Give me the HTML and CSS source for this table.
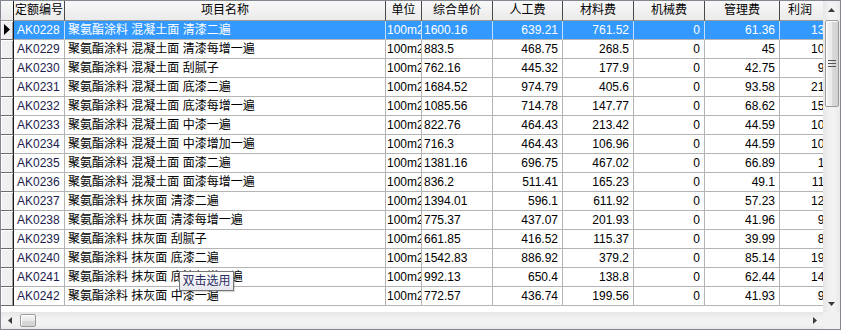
FILE: index.html
```html
<!DOCTYPE html>
<html lang="zh-CN">
<head>
<meta charset="utf-8">
<title>定额选择</title>
<link rel="stylesheet" href="styles.css">
</head>
<body>
<div class="frame">
  <div class="grid">
    <div class="row head">
      <div class="ind hind"></div>
      <div class="hc">定额编号</div>
      <div class="hc">项目名称</div>
      <div class="hc">单位</div>
      <div class="hc">综合单价</div>
      <div class="hc">人工费</div>
      <div class="hc">材料费</div>
      <div class="hc">机械费</div>
      <div class="hc">管理费</div>
      <div class="hc hc-last">利润</div>
    </div>

    <div class="row sel">
      <div class="ind"><svg class="pointer" width="7" height="11" viewBox="0 0 7 11"><polygon points="0,0 6,5.5 0,11" fill="#000"/></svg></div>
      <div class="c id">AK0228</div><div class="c name">聚氨酯涂料 混凝土面 清漆二遍</div><div class="c unit">100m2</div><div class="c price">1600.16</div><div class="c num">639.21</div><div class="c num">761.52</div><div class="c num">0</div><div class="c num">61.36</div><div class="c num">13.81</div>
    </div>
    <div class="row">
      <div class="ind"></div>
      <div class="c id">AK0229</div><div class="c name">聚氨酯涂料 混凝土面 清漆每增一遍</div><div class="c unit">100m2</div><div class="c price">883.5</div><div class="c num">468.75</div><div class="c num">268.5</div><div class="c num">0</div><div class="c num">45</div><div class="c num">10.13</div>
    </div>
    <div class="row">
      <div class="ind"></div>
      <div class="c id">AK0230</div><div class="c name">聚氨酯涂料 混凝土面 刮腻子</div><div class="c unit">100m2</div><div class="c price">762.16</div><div class="c num">445.32</div><div class="c num">177.9</div><div class="c num">0</div><div class="c num">42.75</div><div class="c num">9.62</div>
    </div>
    <div class="row">
      <div class="ind"></div>
      <div class="c id">AK0231</div><div class="c name">聚氨酯涂料 混凝土面 底漆二遍</div><div class="c unit">100m2</div><div class="c price">1684.52</div><div class="c num">974.79</div><div class="c num">405.6</div><div class="c num">0</div><div class="c num">93.58</div><div class="c num">21.06</div>
    </div>
    <div class="row">
      <div class="ind"></div>
      <div class="c id">AK0232</div><div class="c name">聚氨酯涂料 混凝土面 底漆每增一遍</div><div class="c unit">100m2</div><div class="c price">1085.56</div><div class="c num">714.78</div><div class="c num">147.77</div><div class="c num">0</div><div class="c num">68.62</div><div class="c num">15.44</div>
    </div>
    <div class="row">
      <div class="ind"></div>
      <div class="c id">AK0233</div><div class="c name">聚氨酯涂料 混凝土面 中漆一遍</div><div class="c unit">100m2</div><div class="c price">822.76</div><div class="c num">464.43</div><div class="c num">213.42</div><div class="c num">0</div><div class="c num">44.59</div><div class="c num">10.03</div>
    </div>
    <div class="row">
      <div class="ind"></div>
      <div class="c id">AK0234</div><div class="c name">聚氨酯涂料 混凝土面 中漆增加一遍</div><div class="c unit">100m2</div><div class="c price">716.3</div><div class="c num">464.43</div><div class="c num">106.96</div><div class="c num">0</div><div class="c num">44.59</div><div class="c num">10.03</div>
    </div>
    <div class="row">
      <div class="ind"></div>
      <div class="c id">AK0235</div><div class="c name">聚氨酯涂料 混凝土面 面漆二遍</div><div class="c unit">100m2</div><div class="c price">1381.16</div><div class="c num">696.75</div><div class="c num">467.02</div><div class="c num">0</div><div class="c num">66.89</div><div class="c num">15.1</div>
    </div>
    <div class="row">
      <div class="ind"></div>
      <div class="c id">AK0236</div><div class="c name">聚氨酯涂料 混凝土面 面漆每增一遍</div><div class="c unit">100m2</div><div class="c price">836.2</div><div class="c num">511.41</div><div class="c num">165.23</div><div class="c num">0</div><div class="c num">49.1</div><div class="c num">11.05</div>
    </div>
    <div class="row">
      <div class="ind"></div>
      <div class="c id">AK0237</div><div class="c name">聚氨酯涂料 抹灰面 清漆二遍</div><div class="c unit">100m2</div><div class="c price">1394.01</div><div class="c num">596.1</div><div class="c num">611.92</div><div class="c num">0</div><div class="c num">57.23</div><div class="c num">12.88</div>
    </div>
    <div class="row">
      <div class="ind"></div>
      <div class="c id">AK0238</div><div class="c name">聚氨酯涂料 抹灰面 清漆每增一遍</div><div class="c unit">100m2</div><div class="c price">775.37</div><div class="c num">437.07</div><div class="c num">201.93</div><div class="c num">0</div><div class="c num">41.96</div><div class="c num">9.44</div>
    </div>
    <div class="row">
      <div class="ind"></div>
      <div class="c id">AK0239</div><div class="c name">聚氨酯涂料 抹灰面 刮腻子</div><div class="c unit">100m2</div><div class="c price">661.85</div><div class="c num">416.52</div><div class="c num">115.37</div><div class="c num">0</div><div class="c num">39.99</div><div class="c num">8.75</div>
    </div>
    <div class="row">
      <div class="ind"></div>
      <div class="c id">AK0240</div><div class="c name">聚氨酯涂料 抹灰面 底漆二遍</div><div class="c unit">100m2</div><div class="c price">1542.83</div><div class="c num">886.92</div><div class="c num">379.2</div><div class="c num">0</div><div class="c num">85.14</div><div class="c num">19.16</div>
    </div>
    <div class="row">
      <div class="ind"></div>
      <div class="c id">AK0241</div><div class="c name">聚氨酯涂料 抹灰面 底漆每增一遍</div><div class="c unit">100m2</div><div class="c price">992.13</div><div class="c num">650.4</div><div class="c num">138.8</div><div class="c num">0</div><div class="c num">62.44</div><div class="c num">14.05</div>
    </div>
    <div class="row">
      <div class="ind"></div>
      <div class="c id">AK0242</div><div class="c name">聚氨酯涂料 抹灰面 中漆一遍</div><div class="c unit">100m2</div><div class="c price">772.57</div><div class="c num">436.74</div><div class="c num">199.56</div><div class="c num">0</div><div class="c num">41.93</div><div class="c num">9.43</div>
    </div>

    <div class="tooltip">双击选用</div>
  </div>

  <div class="vscroll">
    <div class="sbtn"><svg width="7" height="4" viewBox="0 0 7 4"><polygon points="0,4 3.5,0 7,4" fill="#3c3c3c"/></svg></div>
    <div class="vtrack">
      <div class="vthumb"><svg width="8" height="7" viewBox="0 0 8 7"><rect x="0" y="0" width="8" height="1" fill="#555"/><rect x="0" y="3" width="8" height="1" fill="#555"/><rect x="0" y="6" width="8" height="1" fill="#555"/></svg></div>
    </div>
    <div class="sbtn"><svg width="7" height="4" viewBox="0 0 7 4"><polygon points="0,0 7,0 3.5,4" fill="#3c3c3c"/></svg></div>
  </div>

  <div class="hscroll">
    <div class="hbtn"><svg width="4" height="7" viewBox="0 0 4 7"><polygon points="4,0 4,7 0,3.5" fill="#3c3c3c"/></svg></div>
    <div class="htrack"><div class="hthumb"></div></div>
    <div class="hbtn"><svg width="4" height="7" viewBox="0 0 4 7"><polygon points="0,0 4,3.5 0,7" fill="#3c3c3c"/></svg></div>
  </div>

  <div class="corner"></div>
</div>
</body>
</html>
```

FILE: styles.css
```css
html, body {
  margin: 0;
  padding: 0;
  background: #ffffff;
}

body {
  font-family: "Liberation Sans", "Noto Sans CJK SC", sans-serif;
  font-size: 12px;
  color: #000;
}

.frame {
  width: 841px;
  height: 330px;
  box-sizing: border-box;
  border: 1px solid #828790;
  display: grid;
  grid-template-columns: 822px 17px;
  grid-template-rows: 311px 17px;
  background: #fff;
}

.grid {
  position: relative;
  overflow: hidden;
  background: #fff;
}

.row {
  display: grid;
  grid-template-columns: 13px 51px 321px 36px 71px 70px 71px 71px 75px 66px;
  width: 845px;
  height: 19px;
}

.row.head {
  height: 20px;
}

.ind {
  box-sizing: border-box;
  height: 19px;
  background: #f0f0f0;
  border-right: 1px solid #1a1a1a;
  border-bottom: 1px solid #6d6d6d;
  box-shadow: inset 1px 1px 0 #ffffff, inset -1px 0 0 #a0a0a0;
  display: flex;
  align-items: center;
  padding-left: 3px;
}

.pointer {
  display: block;
  margin-top: -1px;
}

.hind {
  height: 20px;
  background: linear-gradient(#f8f8f8, #ebebeb);
  border-bottom: 1px solid #9a9a9a;
  box-shadow: none;
}

.hc {
  box-sizing: border-box;
  height: 20px;
  line-height: 19px;
  text-align: center;
  white-space: nowrap;
  overflow: hidden;
  background: linear-gradient(#f8f8f8, #ebebeb);
  border-right: 1px solid #4a4a4a;
  border-bottom: 1px solid #9a9a9a;
  color: #000;
}

.hc-last {
  text-align: left;
  padding-left: 8px;
  border-right: none;
}

.c {
  box-sizing: border-box;
  height: 19px;
  line-height: 18px;
  white-space: nowrap;
  overflow: hidden;
  border-right: 1px solid #b4b4b4;
  border-bottom: 1px solid #b4b4b4;
  padding: 0 2px;
}

.id {
  color: #1c1c4e;
  padding-left: 3px;
}

.name {
  padding-left: 3px;
}

.unit {
  padding-left: 1px;
  padding-right: 0;
}

.price {
  padding-left: 2px;
}

.num {
  text-align: right;
  padding-right: 4px;
}

.sel .c {
  background: #3399ff;
  color: #ffffff;
  border-right-color: #c6ddf6;
}

.tooltip {
  position: absolute;
  left: 178px;
  top: 270px;
  width: 55px;
  height: 20px;
  box-sizing: border-box;
  border: 1px solid #767676;
  background: linear-gradient(#ffffff, #e6e7ef);
  color: #2c2f62;
  line-height: 18px;
  text-align: center;
  box-shadow: 1px 1px 1px rgba(0, 0, 0, 0.15);
}

/* scrollbars */
.vscroll {
  display: flex;
  flex-direction: column;
  background: linear-gradient(to right, #e6e6e6, #f2f2f2 40%, #f2f2f2 70%, #e9e9e9);
}

.sbtn {
  height: 17px;
  flex: none;
  display: flex;
  align-items: center;
  justify-content: center;
}

.vtrack {
  flex: 1;
  display: flex;
  flex-direction: column;
  align-items: center;
}

.vthumb {
  margin-top: 2px;
  width: 14px;
  height: 87px;
  box-sizing: border-box;
  border: 1px solid #9b9b9b;
  border-radius: 2px;
  background: linear-gradient(to right, #f4f4f4, #e9e9e9 50%, #dadada 51%, #d2d2d2);
  box-shadow: inset 1px 1px 0 #ffffff;
  display: flex;
  align-items: center;
  justify-content: center;
}

.vthumb svg {
  display: block;
}

.hscroll {
  display: flex;
  background: linear-gradient(#e6e6e6, #f2f2f2 40%, #f2f2f2 70%, #e9e9e9);
}

.hbtn {
  width: 17px;
  flex: none;
  display: flex;
  align-items: center;
  justify-content: center;
}

.htrack {
  flex: 1;
  display: flex;
  align-items: flex-start;
}

.hthumb {
  margin-top: 2px;
  margin-left: 2px;
  width: 16px;
  height: 13px;
  box-sizing: border-box;
  border: 1px solid #9b9b9b;
  border-radius: 2px;
  background: linear-gradient(#f4f4f4, #e9e9e9 50%, #dadada 51%, #d2d2d2);
  box-shadow: inset 1px 1px 0 #ffffff;
}

.corner {
  background: #f0f0f0;
}
```
